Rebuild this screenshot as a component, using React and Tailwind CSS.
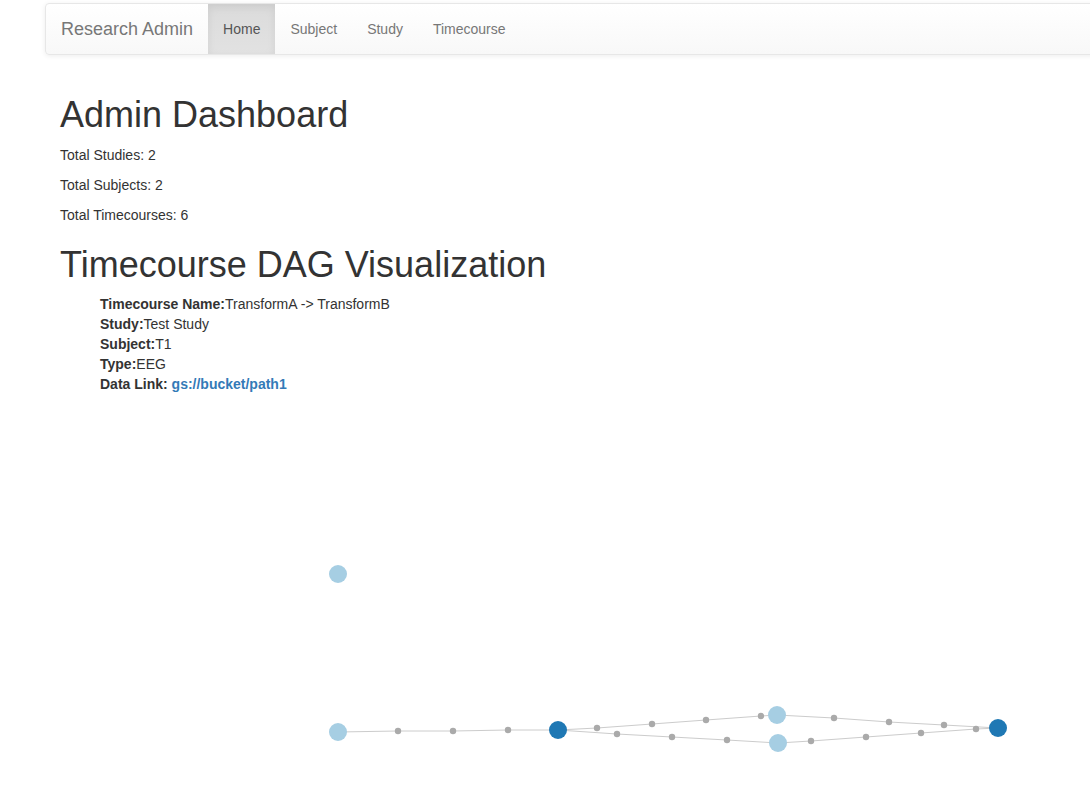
import React from "react";

const left = [[338, 732], [398, 731], [453, 731], [508, 730], [558, 730]];
const upper = [[558, 730], [597, 728], [652, 724], [706, 720], [761, 716], [777, 715], [834, 718], [889, 722], [944, 725], [998, 728]];
const lower = [[558, 730], [617, 734], [672, 737], [727, 740], [778, 743], [811, 741], [866, 737], [921, 733], [976, 729], [998, 728]];
const small = [
  [398, 731], [453, 731], [508, 730],
  [597, 728], [652, 724], [706, 720], [761, 716],
  [834, 718], [889, 722], [944, 725],
  [617, 734], [672, 737], [727, 740],
  [811, 741], [866, 737], [921, 733], [976, 729],
];
const big = [
  [338, 574, "#a6cee3"],
  [338, 732, "#a6cee3"],
  [558, 730, "#1f78b4"],
  [777, 715, "#a6cee3"],
  [778, 743, "#a6cee3"],
  [998, 728, "#1f78b4"],
];

const pts = (a) => a.map((p) => p.join(",")).join(" ");

export default function App() {
  return (
    <div
      className="w-[1090px] h-[812px] overflow-hidden bg-white pt-[3px] text-[14px] leading-[20px] text-[#333]"
      style={{ fontFamily: '"Liberation Sans", Arial, sans-serif' }}
    >
      <nav className="ml-[45px] w-[1080px] h-[52px] mb-[20px] flex items-stretch border border-[#e7e7e7] rounded-[4px] bg-gradient-to-b from-white to-[#f8f8f8] shadow-[inset_0_1px_0_rgba(255,255,255,0.15),0_1px_5px_rgba(0,0,0,0.075)]">
        <div className="px-[15px] flex items-center text-[18px] leading-[20px] text-[#777]">Research Admin</div>
        <div className="flex">
          <div className="px-[15px] flex items-center text-[#555] bg-gradient-to-b from-[#dbdbdb] to-[#e2e2e2] shadow-[inset_0_3px_9px_rgba(0,0,0,0.075)]">Home</div>
          <div className="px-[15px] flex items-center text-[#777]">Subject</div>
          <div className="px-[15px] flex items-center text-[#777]">Study</div>
          <div className="px-[15px] flex items-center text-[#777]">Timecourse</div>
        </div>
      </nav>
      <div className="pl-[60px] pt-[20px]">
        <h1 className="text-[36px] leading-[1.1] font-normal mt-0 mb-[10px]">Admin Dashboard</h1>
        <p className="mb-[10px]">Total Studies: 2</p>
        <p className="mb-[10px]">Total Subjects: 2</p>
        <p className="mb-[20px]">Total Timecourses: 6</p>
        <h1 className="text-[36px] leading-[1.1] font-normal mt-0 mb-[10px]">Timecourse DAG Visualization</h1>
        <ul className="pl-[40px] list-none">
          <li><b>Timecourse Name:</b>TransformA -&gt; TransformB</li>
          <li><b>Study:</b>Test Study</li>
          <li><b>Subject:</b>T1</li>
          <li><b>Type:</b>EEG</li>
          <li><b>Data Link: </b><a className="font-bold text-[#337ab7]">gs://bucket/path1</a></li>
        </ul>
      </div>
      <svg className="block" width="1090" height="418" viewBox="0 394 1090 418">
        <g fill="none" stroke="#cccccc" strokeWidth="1">
          <polyline points={pts(left)} />
          <polyline points={pts(upper)} />
          <polyline points={pts(lower)} />
        </g>
        {small.map(([x, y], i) => (
          <circle key={"s" + i} cx={x} cy={y} r="3.2" fill="#aaaaaa" />
        ))}
        {big.map(([x, y, c], i) => (
          <circle key={"b" + i} cx={x} cy={y} r="9" fill={c} />
        ))}
      </svg>
    </div>
  );
}
